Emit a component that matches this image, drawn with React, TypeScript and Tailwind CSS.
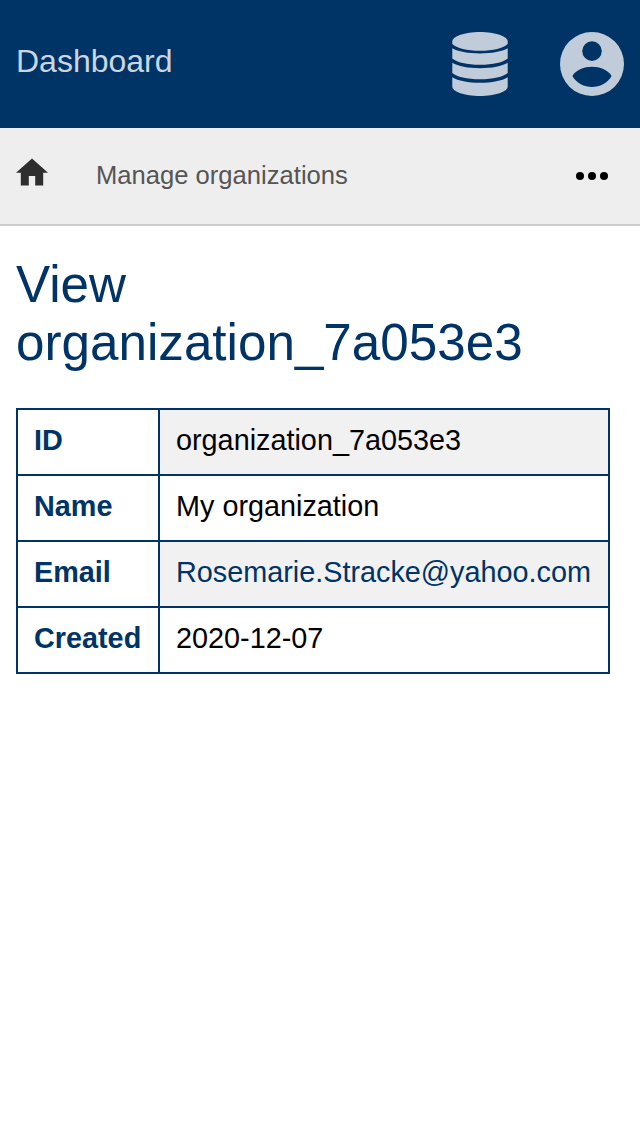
const rows: { label: string; value: string; link?: boolean }[] = [
  { label: "ID", value: "organization_7a053e3" },
  { label: "Name", value: "My organization" },
  { label: "Email", value: "Rosemarie.Stracke@yahoo.com", link: true },
  { label: "Created", value: "2020-12-07" },
];

export default function App() {
  return (
    <div className="min-h-[1136px] bg-white font-['Liberation_Sans',Arial,sans-serif] text-black">
      <header className="flex h-32 items-center justify-between bg-[#003366] px-4 text-[#c0ccd9]">
        <a className="pb-1.5 text-[32px] leading-10 text-[#ccd6e0]">Dashboard</a>
        <div className="flex items-center gap-[52px]">
          <svg width="56" height="64" viewBox="0 0 56 64" fill="currentColor">
            <path d="M.3 9.5C.3 4.3 12.7 0 28 0s27.7 4.3 27.7 9.5V12c-4 4.1-15 6.8-27.7 6.8S4.3 16.1.3 12z" />
            <path d="M.3 16.3C6 19.7 16 21.4 28 21.4s22-1.7 27.7-5.1v10.2c-4 3.8-15 6.3-27.7 6.3S4.3 30.3.3 26.5z" />
            <path d="M.3 30.8C6 34.4 16 36.2 28 36.2s22-1.8 27.7-5.4v10.2c-4 3.8-15 6.3-27.7 6.3S4.3 44.8.3 41z" />
            <path d="M.3 45.3C6 48.9 16 50.8 28 50.8s22-1.9 27.7-5.5v9.2C55.7 59.7 43.3 64 28 64S.3 59.7.3 54.5z" />
          </svg>
          <svg width="64" height="64" viewBox="0 0 64 64" fill="currentColor">
            <path
              fillRule="evenodd"
              d="M32 0a32 32 0 1 0 0 64 32 32 0 0 0 0-64zM32 9.3a9.8 9.8 0 1 1 0 19.6 9.8 9.8 0 0 1 0-19.6zM12.8 43.3C16.5 37.9 23.8 34.8 32 34.8s15.5 3.1 19.2 8.5q.5.8 0 1.5C47.2 51.1 40 55 32 55s-15.2-3.9-19.2-10.2q-.5-.7 0-1.5z"
            />
          </svg>
        </div>
      </header>
      <nav className="flex h-[98px] items-center border-b-2 border-[#cccccc] bg-[#eeeeee] px-4">
        <svg className="mb-2" width="32" height="28" viewBox="2 2.75 20 17.5" fill="#2e2e2e">
          <path d="M10 20v-6h4v6h5v-8h3L12 3 2 12h3v8z" />
        </svg>
        <a className="ml-12 pb-0.5 text-[25.6px] leading-8 text-[#555555]">Manage organizations</a>
        <svg className="mr-4 ml-auto" width="32" height="8" viewBox="0 0 32 8" fill="#000000">
          <circle cx="4" cy="4" r="4" />
          <circle cx="16" cy="4" r="4" />
          <circle cx="28" cy="4" r="4" />
        </svg>
      </nav>
      <main className="px-4 pt-[30px]">
        <h1 className="text-[51.2px] leading-[58px] text-[#003366]">
          View
          <br />
          organization_7a053e3
        </h1>
        <table className="mt-9 border-collapse border-2 border-[#003366] text-[28.8px] leading-8">
          <tbody>
            {rows.map((row) => (
              <tr key={row.label} className="h-[66px] odd:bg-[#f1f1f1]">
                <th className="w-[142px] border-2 border-[#003366] bg-white px-4 pt-0 pb-1 text-left font-bold text-[#003366]">
                  {row.label}
                </th>
                <td className="w-[450px] border-2 border-[#003366] px-4 pt-0 pb-1">
                  {row.link ? <a className="text-[#003366]">{row.value}</a> : row.value}
                </td>
              </tr>
            ))}
          </tbody>
        </table>
      </main>
    </div>
  );
}
